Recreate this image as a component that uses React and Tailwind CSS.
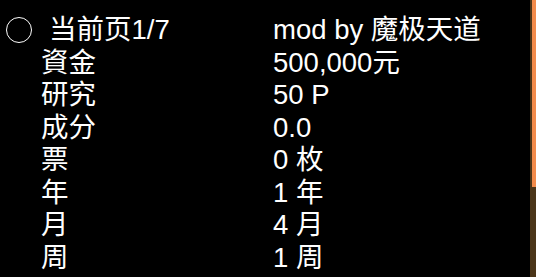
import React from "react";

const rows = [
  { label: "資金", value: "500,000元" },
  { label: "研究", value: "50 P" },
  { label: "成分", value: "0.0" },
  { label: "票", value: "0 枚" },
  { label: "年", value: "1 年" },
  { label: "月", value: "4 月" },
  { label: "周", value: "1 周" },
];

const font = {
  fontFamily: '"Liberation Sans", "Noto Sans CJK SC", sans-serif',
};

export default function App() {
  return (
    <div className="flex h-[277px] w-[536px] overflow-hidden bg-black text-white" style={font}>
      <div className="flex-1 pt-[14px] text-[27.5px] leading-[32.5px]">
        {/* header row */}
        <div className="flex h-[32.5px] items-center">
          <div className="ml-[6px] h-[26px] w-[26px] shrink-0 rounded-full border border-white" />
          <span className="ml-[17px] w-[224px] whitespace-nowrap">当前页1/7</span>
          <span className="whitespace-nowrap">mod by 魔极天道</span>
        </div>
        {rows.map((row) => (
          <div className="flex h-[32.5px] items-center" key={row.label}>
            <span className="ml-[41px] w-[232px]">{row.label}</span>
            <span className="whitespace-nowrap">{row.value}</span>
          </div>
        ))}
      </div>
      {/* scrollbar */}
      <div className="flex h-full w-[6px] justify-end bg-[#4b3519]">
        <div className="h-[187px] w-[4px] bg-[#f28b4b]" />
      </div>
    </div>
  );
}
